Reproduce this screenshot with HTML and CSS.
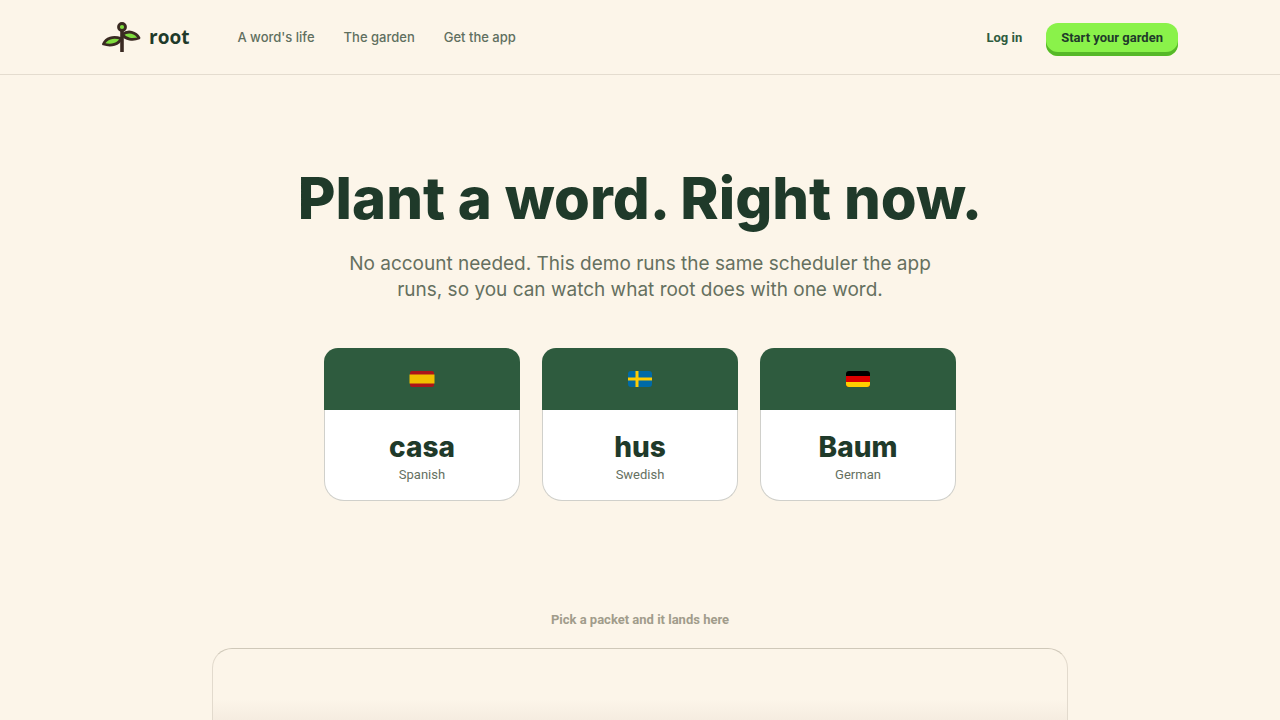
FILE: index.html
```html
<!DOCTYPE html>
<html lang="en">
<head>
  <meta charset="UTF-8">
  <meta name="viewport" content="width=device-width, initial-scale=1.0">
  <title>root</title>
  <link rel="stylesheet" href="styles.css">
</head>
<body>
  <header class="site-header">
    <div class="header-inner">
      <a class="brand" href="#">
        <svg class="brand-mark" viewBox="1 0 39 32" aria-hidden="true">
          <g stroke="#3a2a22" stroke-width="2.800" stroke-linejoin="round">
            <path d="M21 31V9" fill="none" stroke-width="3.600"/>
            <path d="M20 17.500C12 15 5 17 2.500 23C10 25.500 18 23.500 20 17.500Z" fill="#7fdc3f"/>
            <path d="M21.500 13.500C27 9 35 11 38 17C32 19.500 24.500 18.500 21.500 13.500Z" fill="#7fdc3f"/>
            <circle cx="21" cy="6" r="3.500" fill="#7fdc3f"/>
          </g>
        </svg>
        <span class="brand-name">root</span>
      </a>
      <nav class="nav">
        <a href="#life">A word's life</a>
        <a href="#garden">The garden</a>
        <a href="#app">Get the app</a>
      </nav>
      <div class="header-actions">
        <a class="login" href="#">Log in</a>
        <button class="start-btn" type="button">Start your garden</button>
      </div>
    </div>
  </header>

  <main class="demo">
    <h1>Plant a word. Right now.</h1>
    <p class="lead">No account needed. This demo runs the same scheduler the app runs, so you can watch what root does with one word.</p>

    <div class="packets">
      <button class="packet" type="button">
        <span class="packet-top">
          <svg class="flag" viewBox="0 0 26 18" aria-hidden="true">
            <rect x="1" y="1" width="24" height="16" rx="2" fill="#aa151b"/>
            <rect x="0.5" y="4.5" width="25" height="9" fill="#f1bf00"/>
          </svg>
        </span>
        <span class="packet-body">
          <span class="packet-word">casa</span>
          <span class="packet-lang">Spanish</span>
        </span>
      </button>
      <button class="packet" type="button">
        <span class="packet-top">
          <svg class="flag" viewBox="0 0 26 18" aria-hidden="true">
            <rect x="1" y="1" width="24" height="16" rx="3" fill="#006aa7"/>
            <path d="M8.500 1h3v6.500H25v3H11.500V17h-3v-6.500H1v-3h7.500z" fill="#fecc02"/>
          </svg>
        </span>
        <span class="packet-body">
          <span class="packet-word">hus</span>
          <span class="packet-lang">Swedish</span>
        </span>
      </button>
      <button class="packet" type="button">
        <span class="packet-top">
          <svg class="flag" viewBox="0 0 26 18" aria-hidden="true">
            <rect x="1" y="1" width="24" height="16" rx="3" fill="#000"/>
            <path d="M1 6h24v8a3 3 0 0 1-3 3H4a3 3 0 0 1-3-3z" fill="#d00"/>
            <path d="M1 12h24v2a3 3 0 0 1-3 3H4a3 3 0 0 1-3-3z" fill="#ffce00"/>
          </svg>
        </span>
        <span class="packet-body">
          <span class="packet-word">Baum</span>
          <span class="packet-lang">German</span>
        </span>
      </button>
    </div>

    <p class="hint">Pick a packet and it lands here</p>
    <div class="plot"></div>
  </main>
</body>
</html>
```
FILE: styles.css
```css
* {
  box-sizing: border-box;
}
body {
  margin: 0;
  background: #fcf5e9;
  color: #1f3a2a;
  font-family: Roboto, sans-serif;
  font-size: 13px;
}
a {
  text-decoration: none;
}
button {
  border: none;
  padding: 0;
  font-family: inherit;
  color: inherit;
  cursor: pointer;
}

/* header */
.site-header {
  border-bottom: 1px solid #e4dccf;
  padding: 0 24px;
}
.header-inner {
  display: flex;
  align-items: center;
  max-width: 1076px;
  height: 74px;
  margin: 0 auto;
}
.brand {
  display: flex;
  align-items: center;
  gap: 8px;
  color: #1f3a2a;
}
.brand-mark {
  width: 39px;
  height: 32px;
}
.brand-name {
  font-family: 'Open Sans', sans-serif;
  font-size: 19px;
  font-weight: 700;
}
.nav {
  display: flex;
  gap: 29px;
  margin-left: 48px;
}
.nav a {
  color: #5f6f5f;
  font-family: Inter, sans-serif;
  font-weight: 500;
}
.header-actions {
  display: flex;
  align-items: center;
  gap: 24px;
  margin-left: auto;
}
.login {
  color: #2e5b3e;
  font-weight: 700;
}
.start-btn {
  height: 33px;
  margin-top: 4px;
  padding: 0 15px 4px;
  border-radius: 12px;
  background: #8af24a;
  box-shadow: inset 0 -4px #56b828;
  font-size: 13px;
  font-weight: 700;
}

/* demo */
.demo {
  padding: 88px 24px 64px;
  text-align: center;
}
h1 {
  margin: 0;
  font-family: Inter, sans-serif;
  font-size: 58px;
  font-weight: 800;
  line-height: 70px;
}
.lead {
  max-width: 600px;
  margin: 18px auto 0;
  color: #65705f;
  font-family: Inter, sans-serif;
  font-size: 19px;
  line-height: 26px;
}
.packets {
  display: flex;
  justify-content: center;
  gap: 22px;
  margin-top: 45px;
}
.packet {
  display: flex;
  flex-direction: column;
  width: 196px;
  background: none;
}
.packet-top {
  display: flex;
  align-items: center;
  justify-content: center;
  width: 100%;
  height: 62px;
  border-radius: 14px 14px 0 0;
  background: #2e5b3e;
}
.flag {
  width: 26px;
  height: 18px;
}
.packet-body {
  display: flex;
  flex-direction: column;
  width: 100%;
  padding: 20px 16px 15px;
  border: 1px solid #d0d0cb;
  border-top: none;
  border-radius: 0 0 20px 20px;
  background: #fff;
}
.packet-word {
  margin-bottom: 1px;
  font-family: Inter, sans-serif;
  font-size: 28px;
  font-weight: 800;
  line-height: 34px;
}
.packet-lang {
  color: #65705f;
  font-size: 13px;
  line-height: 20px;
}
.hint {
  margin: 109px 0 0;
  color: #a19c8b;
  font-weight: 700;
  line-height: 20px;
}
.plot {
  max-width: 856px;
  height: 320px;
  margin: 18px auto 0;
  border: 1px solid #e2dacd;
  border-top-color: #cfc8b9;
  border-radius: 20px;
  background: linear-gradient(#fcf5e9 50px, #f5ece0 72px, #e9dccb);
}
```
